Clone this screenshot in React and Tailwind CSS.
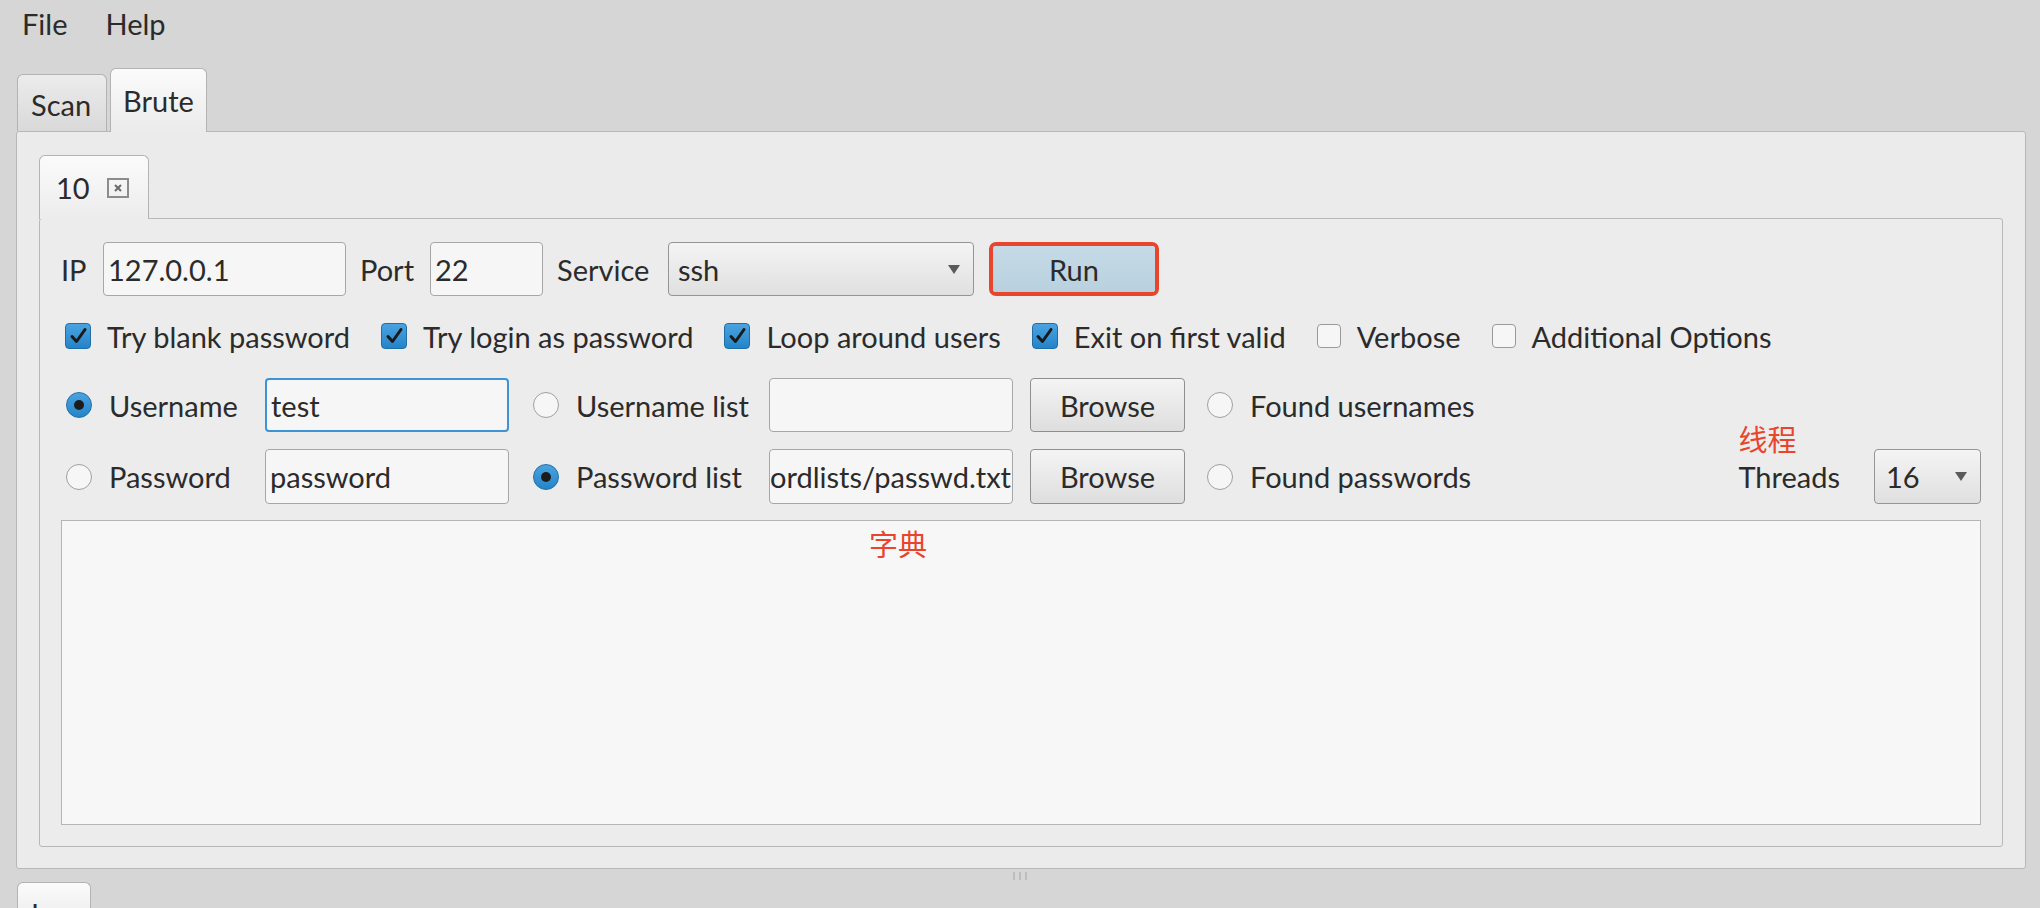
import React from 'react';

// small down triangle used by the combo boxes
const Arrow = () => (
  <svg width="14" height="11" viewBox="0 0 14 11">
    <path d="M1 1h12L7 10z" fill="#5a5a5a" />
  </svg>
);

const CheckBox = ({ checked, label }) => (
  <div className="flex items-center gap-[16px]">
    {checked ? (
      <span className="flex h-[26px] w-[26px] items-center justify-center rounded-[4px] border border-[#1f6ea6] bg-gradient-to-b from-[#4aa3e0] to-[#2384c9]">
        <svg width="21" height="21" viewBox="0 0 21 21">
          <path d="M4 10.5l4.5 5L17 3.5" fill="none" stroke="#1a1a1a" strokeWidth="3" strokeLinecap="round" strokeLinejoin="round" />
        </svg>
      </span>
    ) : (
      <span className="h-[24px] w-[24px] rounded-[4px] border border-[#9a9a9a] bg-[#f6f6f6]" />
    )}
    <span>{label}</span>
  </div>
);

const Radio = ({ checked, label, className = '' }) => (
  <div className={`flex items-center gap-[17px] ${className}`}>
    {checked ? (
      <span className="flex h-[26px] w-[26px] items-center justify-center rounded-full border border-[#1f6ea6] bg-gradient-to-b from-[#4aa3e0] to-[#2384c9]">
        <span className="h-[10px] w-[10px] rounded-full bg-[#1c1c1c]" />
      </span>
    ) : (
      <span className="h-[26px] w-[26px] rounded-full border border-[#a0a0a0] bg-[#f6f6f6]" />
    )}
    <span>{label}</span>
  </div>
);

const Field = ({ value, width, focused, alignEnd }) => (
  <div
    className={
      (focused
        ? 'border-2 border-[#3d93d6] '
        : 'border border-[#a7a7a7] ') +
      (alignEnd ? 'justify-end pr-[1px] ' : 'pl-[4px] ') +
      'flex h-full items-center overflow-hidden whitespace-nowrap rounded-[4px] bg-[#f6f6f6]'
    }
    style={{ width }}
  >
    {value}
  </div>
);

const Button = ({ children, width }) => (
  <div
    className="flex h-full items-center justify-center rounded-[4px] border border-[#8f8f8f] bg-gradient-to-b from-[#f4f4f4] to-[#dedede]"
    style={{ width }}
  >
    {children}
  </div>
);

const Combo = ({ value, width, pl }) => (
  <div
    className="flex h-full items-center justify-between rounded-[4px] border border-[#959595] bg-gradient-to-b from-[#f4f4f4] to-[#e0e0e0] pr-[12px]"
    style={{ width, paddingLeft: pl }}
  >
    <span>{value}</span>
    <Arrow />
  </div>
);

const App = () => {
  return (
    <div className="flex h-[908px] flex-col overflow-hidden bg-[#d6d6d6] font-['Lato','Noto_Sans_CJK_SC',sans-serif] text-[29px] leading-none text-[#2b2b2b]">
      {/* menu bar */}
      <div className="flex h-[46px] shrink-0 items-center gap-[38px] pl-[22px]">
        <span>File</span>
        <span>Help</span>
      </div>

      {/* top tabs */}
      <div className="flex h-[85px] shrink-0 items-end gap-[3px] pl-[17px]">
        <div className="flex h-[57px] w-[90px] items-center rounded-t-[6px] border border-b-0 border-[#b3b3b3] bg-gradient-to-b from-[#ececec] to-[#d9d9d9] pl-[13px] pt-[2px]">
          Scan
        </div>
        <div className="relative z-10 flex h-[64px] w-[97px] translate-y-px items-center rounded-t-[6px] border border-b-0 border-[#b3b3b3] bg-gradient-to-b from-[#fbfbfb] to-[#ebebeb] pl-[12px]">
          Brute
        </div>
      </div>

      {/* outer tab pane */}
      <div className="ml-[16px] mr-[14px] flex h-[738px] shrink-0 flex-col rounded-[3px] border border-[#b8b8b8] bg-[#ebebeb] px-[22px] pb-[21px] pt-[22px]">
        <div className="flex">
          <div className="relative z-10 flex h-[64px] w-[110px] translate-y-px items-center rounded-t-[6px] border border-b-0 border-[#b3b3b3] bg-gradient-to-b from-[#fbfbfb] to-[#ececec] pl-[16px]">
            <span>10</span>
            <span className="ml-[17px] flex h-[20px] w-[22px] items-center justify-center border-2 border-[#8c8c8c]">
              <svg width="10" height="10" viewBox="0 0 10 10">
                <path d="M2 2l6 6M8 2l-6 6" stroke="#6a6a6a" strokeWidth="2" />
              </svg>
            </span>
          </div>
        </div>

        {/* inner pane */}
        <div className="flex flex-1 flex-col rounded-[3px] border border-[#b8b8b8] bg-[#ececec] px-[21px] pb-[21px]">
          {/* row 1 */}
          <div className="mt-[23px] flex h-[54px] shrink-0 items-center gap-[14px]">
            <span className="w-[28px]">IP</span>
            <Field value="127.0.0.1" width={243} />
            <span className="w-[56px]">Port</span>
            <Field value="22" width={113} />
            <span className="w-[97px]">Service</span>
            <Combo value="ssh" width={306} pl={9} />
            <div className="ml-[1px] h-full w-[170px] rounded-[7px] border-[4px] border-[#e8452c]">
              <div className="flex h-full w-full items-center justify-center rounded-[3px] bg-gradient-to-b from-[#c5dae6] to-[#b9d1df]">
                Run
              </div>
            </div>
          </div>

          {/* row 2 */}
          <div className="ml-[4px] mt-[28px] flex h-[24px] shrink-0 items-center gap-[31px]">
            <CheckBox checked label="Try blank password" />
            <CheckBox checked label="Try login as password" />
            <CheckBox checked label="Loop around users" />
            <CheckBox checked label="Exit on first valid" />
            <CheckBox label="Verbose" />
            <CheckBox label="Additional Options" />
          </div>

          {/* row 3 */}
          <div className="ml-[5px] mt-[30px] flex h-[54px] shrink-0 items-center">
            <Radio checked label="Username" className="w-[199px]" />
            <Field value="test" width={244} focused />
            <Radio label="Username list" className="ml-[24px] w-[236px]" />
            <Field value="" width={244} />
            <div className="ml-[17px] h-full">
              <Button width={155}>Browse</Button>
            </div>
            <Radio label="Found usernames" className="ml-[22px]" />
          </div>

          {/* row 4 */}
          <div className="ml-[5px] mt-[17px] flex h-[55px] shrink-0 items-center">
            <Radio label="Password" className="w-[199px]" />
            <Field value="password" width={244} />
            <Radio checked label="Password list" className="ml-[24px] w-[236px]" />
            <Field value="ordlists/passwd.txt" width={244} alignEnd />
            <div className="ml-[17px] h-full">
              <Button width={155}>Browse</Button>
            </div>
            <Radio label="Found passwords" className="ml-[22px]" />
            <div className="relative ml-auto flex h-full items-center gap-[34px]">
              <span className="absolute left-0 top-[-24px] text-[#e8452c]">线程</span>
              <span>Threads</span>
              <Combo value="16" width={107} pl={11} />
            </div>
          </div>

          {/* output area */}
          <div className="relative mt-[16px] flex-1 border border-[#b5b5b5] bg-[#f7f7f7]">
            <span className="absolute left-[807px] top-[9px] text-[#e8452c]">字典</span>
          </div>
        </div>
      </div>

      {/* split pane divider */}
      <div className="flex h-[13px] shrink-0 items-center justify-center gap-[4px]">
        <span className="h-[8px] w-[2px] bg-[#bdbdbd]" />
        <span className="h-[8px] w-[2px] bg-[#bdbdbd]" />
        <span className="h-[8px] w-[2px] bg-[#bdbdbd]" />
      </div>

      {/* bottom tab, mostly below the window edge */}
      <div className="ml-[17px] flex h-[40px] w-[74px] shrink-0 rounded-t-[6px] border border-b-0 border-[#b3b3b3] bg-gradient-to-b from-[#fbfbfb] to-[#ececec] pl-[13px] pt-[16px]">
        Log
      </div>
    </div>
  );
};

export default App;
